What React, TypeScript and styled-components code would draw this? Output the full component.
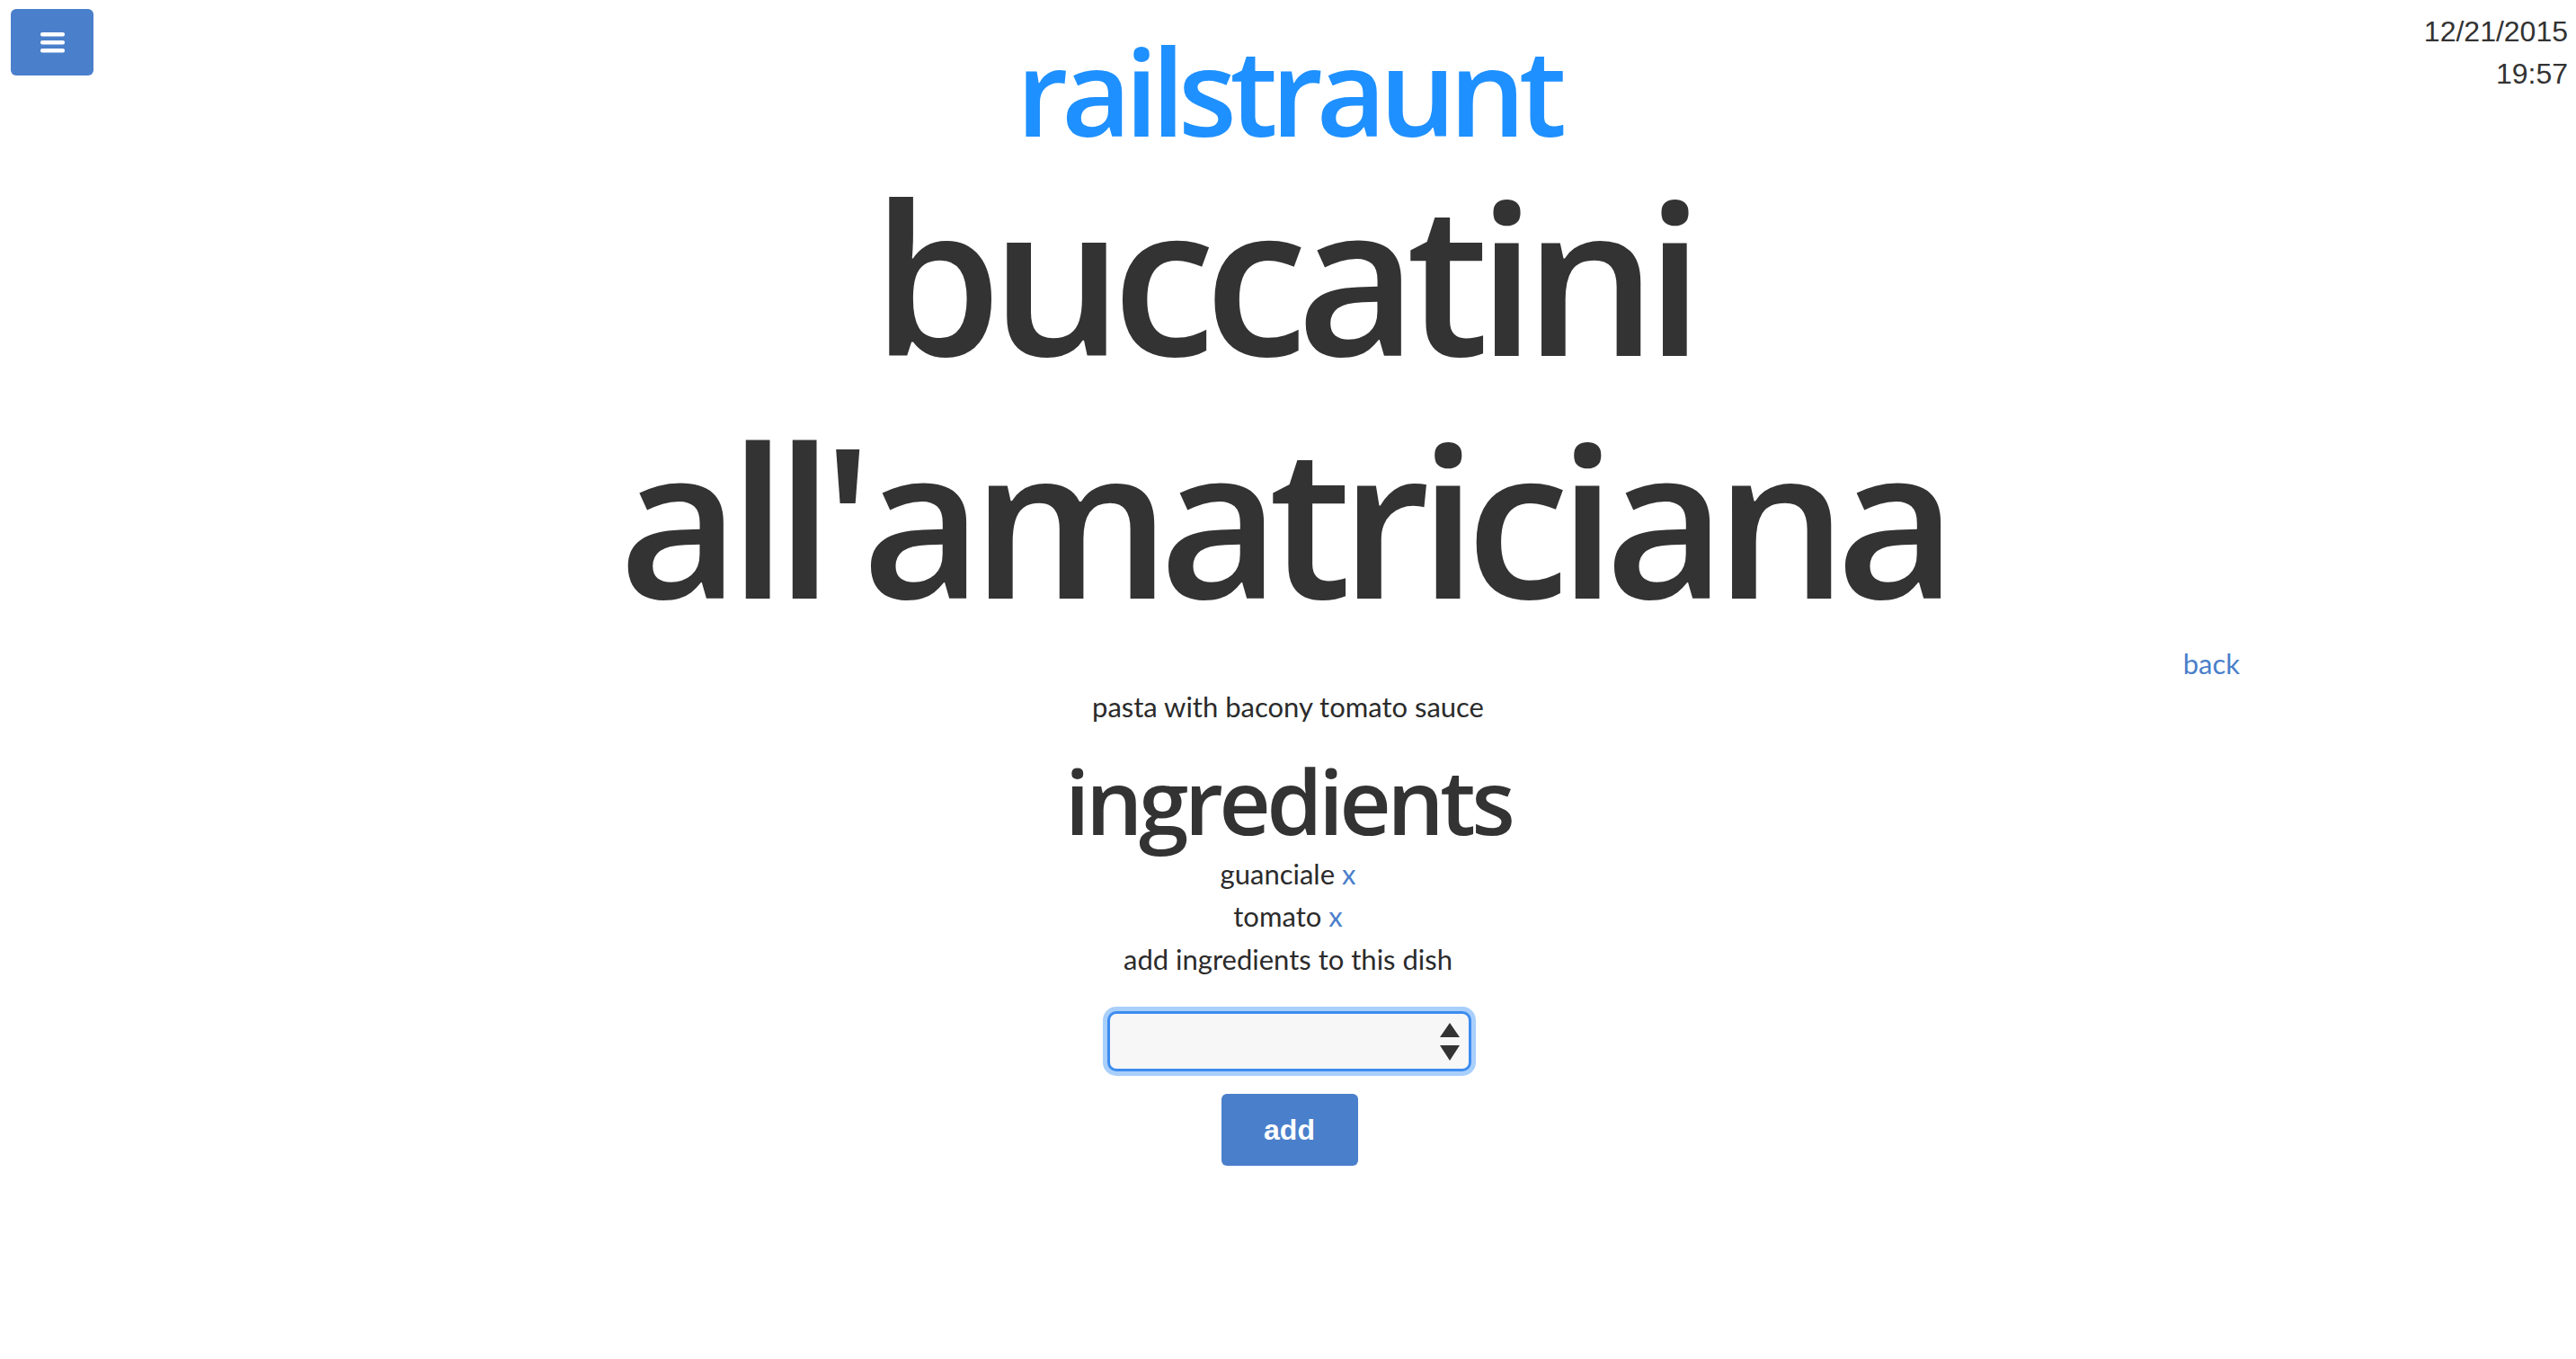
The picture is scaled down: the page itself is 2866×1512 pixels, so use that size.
import React from "react";
import styled, { createGlobalStyle } from "styled-components";

const GlobalStyle = createGlobalStyle`
  html, body { margin: 0; padding: 0; background: #ffffff; }
  body {
    font-family: Lato, "Noto Sans", sans-serif;
    color: #333333;
  }
  * { box-sizing: border-box; }
`;

const Page = styled.div`
  width: 100%;
  min-height: 1512px;
  display: flex;
  flex-direction: column;
`;

const Header = styled.header`
  display: grid;
  grid-template-columns: 1fr auto 1fr;
  align-items: start;
`;

const MenuButton = styled.button`
  justify-self: start;
  margin: 10px 0 0 12px;
  width: 92px;
  height: 74px;
  border: none;
  border-radius: 6px;
  background: #4a7fcb;
  display: flex;
  align-items: center;
  justify-content: center;
  padding: 0;
  cursor: pointer;
`;

const Brand = styled.div`
  margin-top: 33px;
  font-family: "Open Sans", sans-serif;
  font-weight: 600;
  font-size: 134px;
  line-height: 134px;
  letter-spacing: -7.5px;
  color: #1e90ff;
`;

const Clock = styled.div`
  justify-self: end;
  padding: 12px 9px 0 0;
  text-align: right;
  font-family: "Liberation Sans", Arial, sans-serif;
  font-size: 32px;
  line-height: 47px;
  color: #333333;
`;

const Title = styled.h1`
  margin: 4px 0 0;
  text-align: center;
  font-family: "Open Sans", sans-serif;
  font-weight: 600;
  font-size: 232px;
  line-height: 270px;
  letter-spacing: -12.5px;
  padding-right: 12.5px;
  color: #333333;
`;

const BackRow = styled.div`
  display: flex;
  justify-content: flex-end;
  padding-right: 374px;
  margin-top: 4px;
  font-size: 31px;
  line-height: 47px;
`;

const Link = styled.a`
  color: #4a7fcb;
  text-decoration: none;
  cursor: pointer;
`;

const Description = styled.p`
  margin: 1px 0 0;
  text-align: center;
  font-size: 31px;
  line-height: 47px;
  color: #2b2b2b;
`;

const SectionTitle = styled.h2`
  margin: 25px 0 4px;
  text-align: center;
  font-family: "Open Sans", sans-serif;
  font-weight: 600;
  font-size: 100px;
  line-height: 110px;
  letter-spacing: -4.6px;
  color: #333333;
`;

const IngredientList = styled.ul`
  margin: 0;
  padding: 0;
  list-style: none;
  text-align: center;
  font-size: 31px;
  line-height: 47px;
  color: #2b2b2b;
`;

const Item = styled.li``;

const Hint = styled.div`
  margin-top: 1px;
  text-align: center;
  font-size: 31px;
  line-height: 47px;
  color: #2b2b2b;
`;

const AddForm = styled.form`
  margin-top: 34px;
  display: flex;
  flex-direction: column;
  align-items: center;
  gap: 25px;
`;

const SelectWrap = styled.div`
  position: relative;
  width: 405px;
  height: 67px;
  margin-left: 3px;
`;

const Select = styled.select`
  appearance: none;
  -webkit-appearance: none;
  width: 100%;
  height: 100%;
  border: 3px solid #3d8cef;
  border-radius: 10px;
  background: #f7f7f7;
  box-shadow: 0 0 0 5px #a9cffb;
  outline: none;
  font-size: 28px;
`;

const Arrows = styled.svg`
  position: absolute;
  right: 13px;
  top: 13px;
  pointer-events: none;
`;

const AddButton = styled.button`
  width: 152px;
  height: 80px;
  margin-left: 3px;
  border: none;
  border-radius: 6px;
  background: #4a7fcb;
  color: #ffffff;
  font-family: "Liberation Sans", Arial, sans-serif;
  font-weight: 700;
  font-size: 32px;
  cursor: pointer;
`;

export default function App() {
  return (
    <>
      <GlobalStyle />
      <Page>
        <Header>
          <MenuButton aria-label="menu">
            <svg width="27" height="23" viewBox="0 0 27 23">
              <rect x="0" y="0" width="27" height="4.5" rx="2" fill="#fff" />
              <rect x="0" y="9" width="27" height="4.5" rx="2" fill="#fff" />
              <rect x="0" y="18" width="27" height="4.5" rx="2" fill="#fff" />
            </svg>
          </MenuButton>
          <Brand>railstraunt</Brand>
          <Clock>
            12/21/2015
            <br />
            19:57
          </Clock>
        </Header>
        <Title>
          buccatini
          <br />
          all'amatriciana
        </Title>
        <BackRow>
          <Link>back</Link>
        </BackRow>
        <Description>pasta with bacony tomato sauce</Description>
        <SectionTitle>ingredients</SectionTitle>
        <IngredientList>
          <Item>
            guanciale <Link>x</Link>
          </Item>
          <Item>
            tomato <Link>x</Link>
          </Item>
        </IngredientList>
        <Hint>add ingredients to this dish</Hint>
        <AddForm onSubmit={(e) => e.preventDefault()}>
          <SelectWrap>
            <Select defaultValue="">
              <option value=""></option>
              <option value="pecorino">pecorino</option>
              <option value="onion">onion</option>
            </Select>
            <Arrows width="22" height="42" viewBox="0 0 22 42">
              <polygon points="11,0 22,16 0,16" fill="#333" />
              <polygon points="0,25 22,25 11,42" fill="#333" />
            </Arrows>
          </SelectWrap>
          <AddButton type="submit">add</AddButton>
        </AddForm>
      </Page>
    </>
  );
}
